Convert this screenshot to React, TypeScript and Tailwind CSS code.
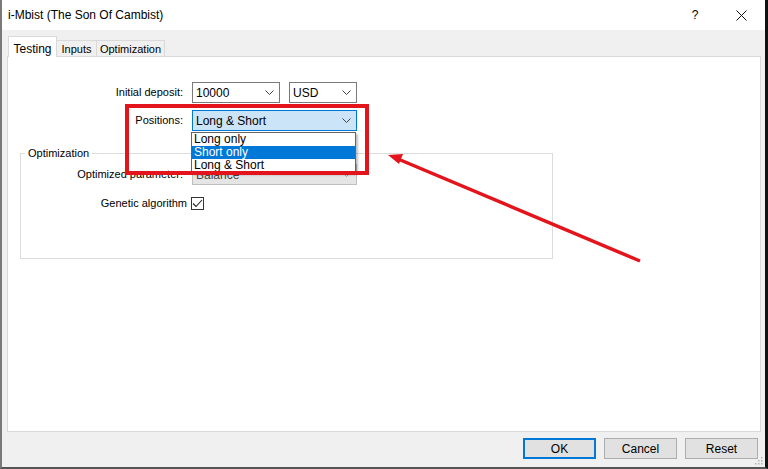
import React from "react";

const Chevron = ({ color = "#444" }: { color?: string }) => (
  <svg width="9" height="6" viewBox="0 0 9 6" className="shrink-0">
    <polyline points="0.5,0.5 4.5,4.5 8.5,0.5" fill="none" stroke={color} strokeWidth="1" />
  </svg>
);

function Combo({ value, w, variant = "normal" }: { value: string; w: string; variant?: "normal" | "focus" | "disabled" }) {
  const cls =
    variant === "focus"
      ? "bg-[#cce4f7] border-[#0078d7]"
      : variant === "disabled"
      ? "bg-[#e5e5e5] border-[#bfbfbf]"
      : "bg-white border-[#7a7a7a]";
  return (
    <div className={`${w} h-[21px] border ${cls} flex items-center justify-between pl-[3px] pr-[5px] text-[12px]`}>
      <span className={variant === "disabled" ? "text-[#444]" : "text-black"}>{value}</span>
      <Chevron color={variant === "disabled" ? "#999" : "#444"} />
    </div>
  );
}

export default function App() {
  return (
    <div
      className="relative w-[768px] h-[469px] flex flex-col bg-[#f0f0f0] border-l-2 border-l-[#7a7a7a] border-r-[3px] border-r-[#111] border-b-2 border-b-[#555] overflow-hidden text-[11px] text-black"
      style={{ fontFamily: '"Liberation Sans", Arial, sans-serif' }}
    >
      {/* Title bar */}
      <div className="h-[30px] bg-white flex items-center pl-[6px] shrink-0">
        <span className="text-[12px]">i-Mbist (The Son Of Cambist)</span>
        <div className="ml-auto flex items-center">
          <span className="text-[12px] w-[46px] text-center">?</span>
          <div className="w-[46px] h-[30px] flex items-center justify-center mr-[1px]">
            <svg width="11" height="11" viewBox="0 0 11 11">
              <path d="M0.5 0.5 L10.5 10.5 M10.5 0.5 L0.5 10.5" stroke="#111" strokeWidth="1" fill="none" />
            </svg>
          </div>
        </div>
      </div>

      {/* Body */}
      <div className="flex-1 flex flex-col pl-[5px] pr-[4px]">
        {/* Tabs */}
        <div className="h-[27px] flex items-end pl-[1px] relative z-10">
          <div className="h-[21px] w-[49px] bg-white border border-[#d9d9d9] border-b-0 flex items-start justify-center pt-[3px] text-[12px]">
            Testing
          </div>
          <div className="h-[17px] w-[40px] border border-[#d9d9d9] border-l-0 border-b-0 flex items-center justify-center">Inputs</div>
          <div className="h-[17px] w-[68px] border border-[#d9d9d9] border-l-0 border-b-0 flex items-center justify-center">Optimization</div>
        </div>
        {/* Panel */}
        <div className="h-[376px] -mt-px bg-white border border-[#d9d9d9] relative">
          <div className="flex flex-col pt-[25px]">
            <div className="flex items-center h-[21px]">
              <div className="w-[176px] text-right pr-[1px]">Initial deposit:</div>
              <div className="ml-[8px] flex gap-[9px]">
                <Combo value="10000" w="w-[88px]" />
                <Combo value="USD" w="w-[68px]" />
              </div>
            </div>
            <div className="flex items-center h-[21px] mt-[7px]">
              <div className="w-[176px] text-right pr-[1px]">Positions:</div>
              <div className="ml-[8px]">
                <Combo value="Long & Short" w="w-[165px]" variant="focus" />
              </div>
            </div>
            {/* Group box */}
            <div className="ml-[12px] mt-[22px] w-[533px] h-[106px] border border-[#dcdcdc] relative">
              <div className="absolute -top-[8px] left-[4px] bg-white px-[3px] leading-[14px]">Optimization</div>
              <div className="flex flex-col pt-[10px]">
                <div className="flex items-center h-[21px]">
                  <div className="w-[163px] text-right pr-[1px]">Optimized parameter:</div>
                  <div className="ml-[8px]">
                    <Combo value="Balance" w="w-[165px]" variant="disabled" />
                  </div>
                </div>
                <div className="flex items-center h-[13px] mt-[12px]">
                  <div className="w-[166px] text-right">Genetic algorithm</div>
                  <div className="ml-[4px] w-[13px] h-[13px] border border-[#333] bg-white flex items-center justify-center">
                    <svg width="11" height="9" viewBox="0 0 11 9">
                      <polyline points="1,4.5 4,7.5 10,1" fill="none" stroke="#222" strokeWidth="1.1" />
                    </svg>
                  </div>
                </div>
              </div>
            </div>
          </div>
        </div>

        {/* Buttons */}
        <div className="flex-1 flex items-start justify-end gap-[8px] pt-[6px] pr-[3px]">
          <button className="w-[73px] h-[21px] bg-[#e1e1e1] border-2 border-[#0078d7] text-[12px]">OK</button>
          <button className="w-[73px] h-[21px] bg-[#e1e1e1] border border-[#adadad] text-[12px]">Cancel</button>
          <button className="w-[73px] h-[21px] bg-[#e1e1e1] border border-[#adadad] text-[12px]">Reset</button>
        </div>
      </div>

      {/* Size grip */}
      <svg className="absolute right-[2px] bottom-[2px]" width="10" height="10" viewBox="0 0 10 10">
        {[
          [8, 2], [8, 5], [5, 5], [8, 8], [5, 8], [2, 8],
        ].map(([x, y], i) => (
          <rect key={i} x={x} y={y} width="1.5" height="1.5" fill="#b5b5b5" />
        ))}
      </svg>

      {/* Dropdown list */}
      <div className="absolute left-[189px] top-[132px] w-[165px] h-[41px] bg-white border border-[#646464] shadow-[2px_2px_2px_rgba(0,0,0,0.25)] flex flex-col z-20 leading-[13px] text-[12px]">
        <div className="h-[13px] pl-[2px]">Long only</div>
        <div className="h-[13px] pl-[2px] bg-[#0078d7] text-white">Short only</div>
        <div className="h-[13px] pl-[2px]">Long &amp; Short</div>
      </div>

      {/* Red annotation rectangle */}
      <div className="absolute left-[123px] top-[104px] w-[244px] h-[71px] border-4 border-[#e3141b] z-30" />

      {/* Arrow */}
      <svg className="absolute left-0 top-0 z-30 pointer-events-none" width="768" height="469" viewBox="0 0 768 469">
        <line x1="638" y1="261" x2="396" y2="159" stroke="#e3141b" strokeWidth="3.5" />
        <polygon points="386,155 401,154 397,164" fill="#e3141b" />
      </svg>
    </div>
  );
}
